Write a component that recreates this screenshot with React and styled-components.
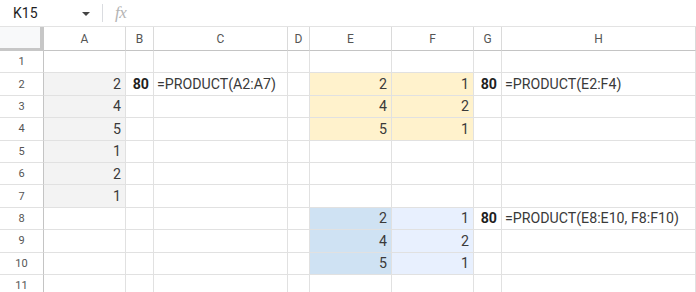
import React from 'react';
import styled, { createGlobalStyle } from 'styled-components';

const GlobalStyle = createGlobalStyle`
  html, body {
    margin: 0;
    padding: 0;
    background: #fff;
    overflow: hidden;
  }
  body {
    font-family: Roboto, "Liberation Sans", Arial, sans-serif;
    color: #1f1f1f;
  }
`;

const COLS = [
  { key: 'A', w: 82 },
  { key: 'B', w: 28 },
  { key: 'C', w: 134 },
  { key: 'D', w: 22 },
  { key: 'E', w: 82 },
  { key: 'F', w: 82 },
  { key: 'G', w: 28 },
  { key: 'H', w: 194 },
];

const FILLS = {
  grey: '#f3f3f3',
  yellow: '#fff2cc',
  blue: '#cfe2f3',
  pale: '#e8f0fe',
};

// row number -> { col: { v, fill, bold, formula } }
const DATA = {
  2: {
    A: { v: '2', fill: 'grey' },
    B: { v: '80', bold: true },
    C: { v: '=PRODUCT(A2:A7)', formula: true },
    E: { v: '2', fill: 'yellow' },
    F: { v: '1', fill: 'yellow' },
    G: { v: '80', bold: true },
    H: { v: '=PRODUCT(E2:F4)', formula: true },
  },
  3: {
    A: { v: '4', fill: 'grey' },
    E: { v: '4', fill: 'yellow' },
    F: { v: '2', fill: 'yellow' },
  },
  4: {
    A: { v: '5', fill: 'grey' },
    E: { v: '5', fill: 'yellow' },
    F: { v: '1', fill: 'yellow' },
  },
  5: { A: { v: '1', fill: 'grey' } },
  6: { A: { v: '2', fill: 'grey' } },
  7: { A: { v: '1', fill: 'grey' } },
  8: {
    E: { v: '2', fill: 'blue' },
    F: { v: '1', fill: 'pale' },
    G: { v: '80', bold: true },
    H: { v: '=PRODUCT(E8:E10, F8:F10)', formula: true },
  },
  9: {
    E: { v: '4', fill: 'blue' },
    F: { v: '2', fill: 'pale' },
  },
  10: {
    E: { v: '5', fill: 'blue' },
    F: { v: '1', fill: 'pale' },
  },
};

const ROWS = [1, 2, 3, 4, 5, 6, 7, 8, 9, 10, 11];

const Page = styled.div`
  width: 696px;
  height: 292px;
  display: flex;
  flex-direction: column;
  overflow: hidden;
`;

const Toolbar = styled.div`
  height: 26px;
  display: flex;
  align-items: center;
  border-bottom: 1px solid #e3e3e3;
  flex-shrink: 0;
`;

const NameBox = styled.div`
  width: 102px;
  height: 100%;
  display: flex;
  align-items: center;
  justify-content: space-between;
  padding: 0 12px 0 13px;
  box-sizing: border-box;
  font-size: 14px;
  color: #1f1f1f;
`;

const Caret = styled.span`
  width: 0;
  height: 0;
  border-left: 4px solid transparent;
  border-right: 4px solid transparent;
  border-top: 4px solid #444;
  margin-top: 1px;
`;

const Divider = styled.div`
  width: 1px;
  height: 18px;
  background: #dadce0;
`;

const Fx = styled.span`
  margin-left: 12px;
  font-family: "Liberation Serif", "DejaVu Serif", serif;
  font-style: italic;
  font-size: 17px;
  color: #b4b4b4;
  letter-spacing: -0.5px;
`;

const Grid = styled.div`
  display: grid;
  grid-template-columns: 44px ${COLS.map((c) => `${c.w}px`).join(' ')};
  grid-template-rows: 24px repeat(11, 22.4px);
`;

const Corner = styled.div`
  background: #f8f9fa;
  border-right: 4px solid #c7c7c7;
  border-bottom: 3px solid #c7c7c7;
  box-sizing: border-box;
`;

const ColHead = styled.div`
  display: flex;
  align-items: center;
  justify-content: center;
  font-size: 12px;
  color: #555;
  background: #fff;
  border-right: 1px solid #dadada;
  border-bottom: 1px solid #c4c4c4;
  box-sizing: border-box;
`;

const RowHead = styled.div`
  display: flex;
  align-items: center;
  justify-content: center;
  font-size: 11px;
  color: #555;
  background: #fff;
  border-right: 1px solid #c4c4c4;
  border-bottom: 1px solid #e1e1e1;
  box-sizing: border-box;
`;

const Cell = styled.div`
  display: flex;
  align-items: center;
  justify-content: ${(p) => (p.$formula ? 'flex-start' : 'flex-end')};
  padding: 0 4px 0 3px;
  box-sizing: border-box;
  background: ${(p) => (p.$fill ? FILLS[p.$fill] : '#fff')};
  border-right: 1px solid #e1e1e1;
  border-bottom: 1px solid #e1e1e1;
  font-size: 14.2px;
  font-weight: ${(p) => (p.$bold ? 700 : 400)};
  color: ${(p) => (p.$bold ? '#1f1f1f' : '#3a3a3a')};
  white-space: nowrap;
  overflow: visible;
`;

export default function App() {
  return (
    <Page>
      <GlobalStyle />
      <Toolbar>
        <NameBox>
          <span>K15</span>
          <Caret />
        </NameBox>
        <Divider />
        <Fx>fx</Fx>
      </Toolbar>
      <Grid>
        <Corner />
        {COLS.map((c) => (
          <ColHead key={c.key}>{c.key}</ColHead>
        ))}
        {ROWS.map((r) => (
          <React.Fragment key={r}>
            <RowHead>{r}</RowHead>
            {COLS.map((c) => {
              const d = (DATA[r] && DATA[r][c.key]) || {};
              return (
                <Cell key={c.key} $fill={d.fill} $bold={d.bold} $formula={d.formula}>
                  {d.v}
                </Cell>
              );
            })}
          </React.Fragment>
        ))}
      </Grid>
    </Page>
  );
}
